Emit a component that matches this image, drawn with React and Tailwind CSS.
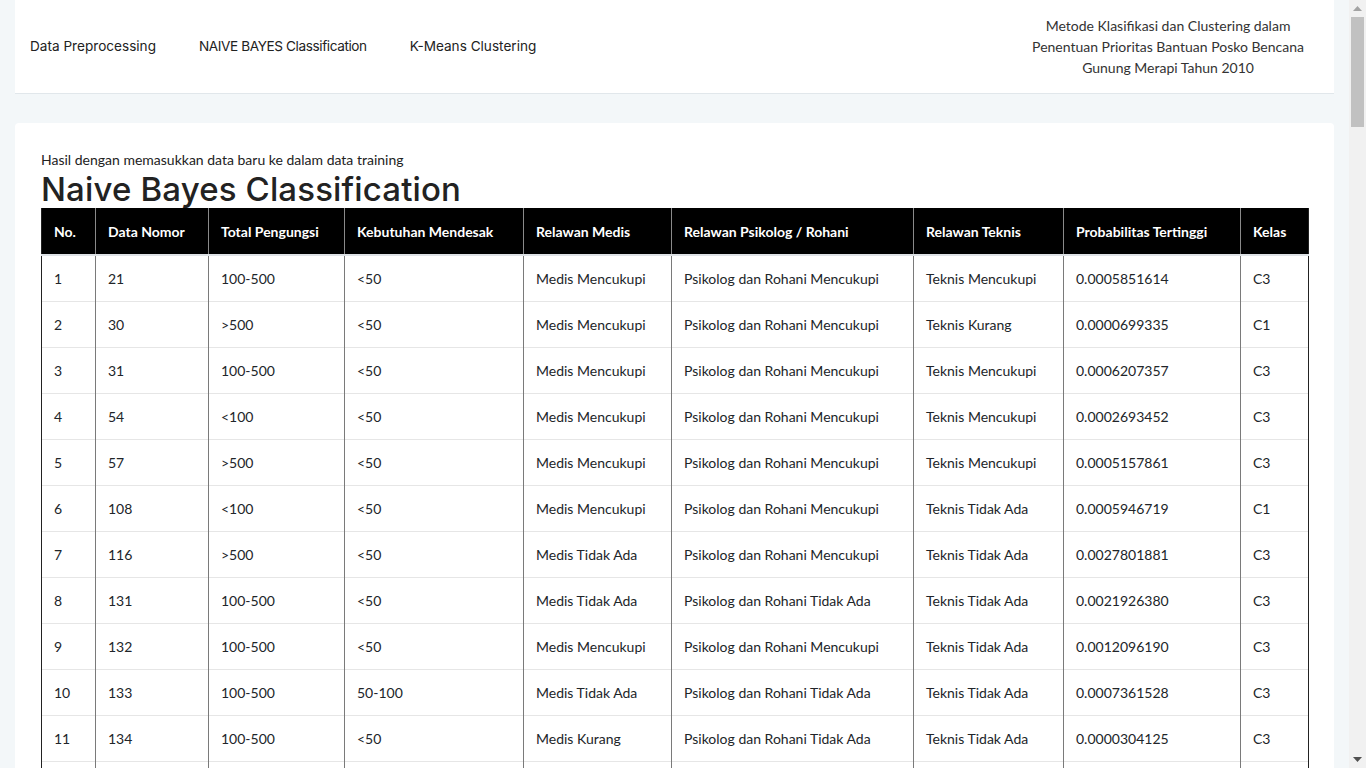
import React from 'react';

const baseRows = [
  ['21', '100-500', '<50', 'Medis Mencukupi', 'Psikolog dan Rohani Mencukupi', 'Teknis Mencukupi', '0.0005851614', 'C3'],
  ['30', '>500', '<50', 'Medis Mencukupi', 'Psikolog dan Rohani Mencukupi', 'Teknis Kurang', '0.0000699335', 'C1'],
  ['31', '100-500', '<50', 'Medis Mencukupi', 'Psikolog dan Rohani Mencukupi', 'Teknis Mencukupi', '0.0006207357', 'C3'],
  ['54', '<100', '<50', 'Medis Mencukupi', 'Psikolog dan Rohani Mencukupi', 'Teknis Mencukupi', '0.0002693452', 'C3'],
  ['57', '>500', '<50', 'Medis Mencukupi', 'Psikolog dan Rohani Mencukupi', 'Teknis Mencukupi', '0.0005157861', 'C3'],
  ['108', '<100', '<50', 'Medis Mencukupi', 'Psikolog dan Rohani Mencukupi', 'Teknis Tidak Ada', '0.0005946719', 'C1'],
  ['116', '>500', '<50', 'Medis Tidak Ada', 'Psikolog dan Rohani Mencukupi', 'Teknis Tidak Ada', '0.0027801881', 'C3'],
  ['131', '100-500', '<50', 'Medis Tidak Ada', 'Psikolog dan Rohani Tidak Ada', 'Teknis Tidak Ada', '0.0021926380', 'C3'],
  ['132', '100-500', '<50', 'Medis Mencukupi', 'Psikolog dan Rohani Mencukupi', 'Teknis Tidak Ada', '0.0012096190', 'C3'],
  ['133', '100-500', '50-100', 'Medis Tidak Ada', 'Psikolog dan Rohani Tidak Ada', 'Teknis Tidak Ada', '0.0007361528', 'C3'],
  ['134', '100-500', '<50', 'Medis Kurang', 'Psikolog dan Rohani Tidak Ada', 'Teknis Tidak Ada', '0.0000304125', 'C3'],
];

// extra rows below the fold so the page is as long as the original
const rows = [...baseRows];
for (let i = 0; rows.length < 104; i++) {
  const r = baseRows[i % baseRows.length];
  rows.push([String(140 + i * 3), ...r.slice(1)]);
}

const headers = [
  ['No.', 'w-[54px]'],
  ['Data Nomor', 'w-[113px]'],
  ['Total Pengungsi', 'w-[136px]'],
  ['Kebutuhan Mendesak', 'w-[179px]'],
  ['Relawan Medis', 'w-[148px]'],
  ['Relawan Psikolog / Rohani', 'w-[242px]'],
  ['Relawan Teknis', 'w-[150px]'],
  ['Probabilitas Tertinggi', 'w-[177px]'],
  ['Kelas', 'w-[68px]'],
];

function FakeScrollbar() {
  return (
    <div className="fixed top-0 right-0 h-screen w-[17px] bg-[#f1f1f1] flex flex-col items-center">
      <div className="h-[17px] flex items-center justify-center">
        <svg width="9" height="5" viewBox="0 0 9 5"><path d="M0 5 L4.5 0 L9 5 Z" fill="#a3a3a3" /></svg>
      </div>
      <div className="w-[13px] h-[110px] bg-[#c1c1c1]" />
      <div className="flex-1" />
      <div className="h-[17px] flex items-center justify-center">
        <svg width="9" height="5" viewBox="0 0 9 5"><path d="M0 0 L9 0 L4.5 5 Z" fill="#505050" /></svg>
      </div>
    </div>
  );
}

export default function App() {
  return (
    <div className="min-h-screen bg-[#f3f7f9] text-[#212529] font-['Lato','Open_Sans',sans-serif]">
      <div className="mr-[17px] px-[15px] pb-10">
        {/* Top bar */}
        <header className="flex items-center justify-between h-[94px] bg-white border-b border-[#e1e7eb] pl-[15px] pr-[30px]">
          <nav className="flex items-center gap-[43px] text-[13.6px] text-[#222] font-['Inter','Noto_Sans',sans-serif] mt-[-1px]">
            <a>Data Preprocessing</a>
            <a className="tracking-[-0.4px]">NAIVE BAYES Classification</a>
            <a>K-Means Clustering</a>
          </nav>
          <div className="text-center text-[14px] leading-[21px] text-[#333] mt-[-1px]">
            Metode Klasifikasi dan Clustering dalam<br />
            Penentuan Prioritas Bantuan Posko Bencana<br />
            Gunung Merapi Tahun 2010
          </div>
        </header>

        {/* Content card */}
        <main className="mt-[29px] bg-white rounded-[4px] px-[26px] pt-[26px] pb-8">
          <p className="text-[14px] leading-[21px] text-[#222]">
            Hasil dengan memasukkan data baru ke dalam data training
          </p>
          <h1 className="text-[33px] leading-[38px] font-medium text-[#222] font-['Inter','Noto_Sans',sans-serif] tracking-[0.15px]">
            Naive Bayes Classification
          </h1>

          <table className="w-full table-fixed border-collapse text-[14px] leading-[21px]">
            <thead>
              <tr className="bg-black text-white border-b-2 border-[#dee2e6]">
                {headers.map(([h, w]) => (
                  <th
                    key={h}
                    className={`${w} text-left font-bold px-3 pt-[13px] pb-3 border-x border-[#8a8a8a] first:border-l-[#222] last:border-r-[#222]`}
                  >
                    {h}
                  </th>
                ))}
              </tr>
            </thead>
            <tbody>
              {rows.map((r, i) => (
                <tr key={i} className="border-b border-[#e6e6e6]">
                  <td className="px-3 py-3 border-l border-[#222] border-r border-r-[#7a7a7a]">{i + 1}</td>
                  {r.map((c, j) => (
                    <td
                      key={j}
                      className={`px-3 py-3 border-r ${j === r.length - 1 ? 'border-[#222]' : 'border-[#7a7a7a]'}`}
                    >
                      {c}
                    </td>
                  ))}
                </tr>
              ))}
            </tbody>
          </table>
        </main>
      </div>
      <FakeScrollbar />
    </div>
  );
}
